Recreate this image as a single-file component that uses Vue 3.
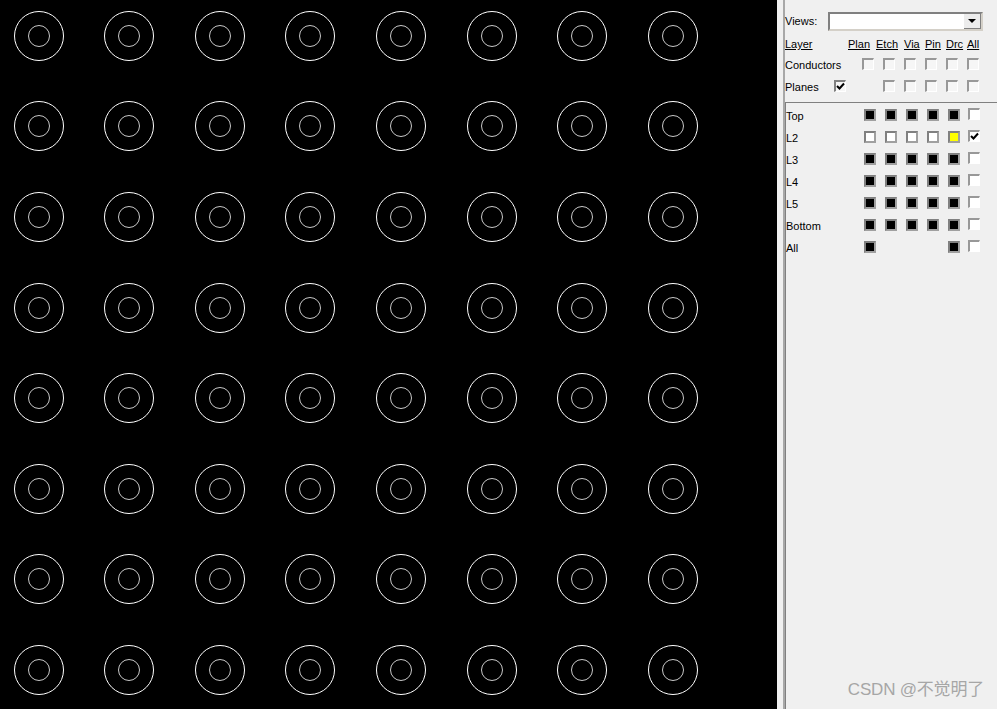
<template>
  <div class="screen">
    <svg class="board" width="777" height="709" viewBox="0 0 777 709">
      <g v-for="y in padY" :key="y">
        <g v-for="x in padX" :key="x">
          <circle :cx="x" :cy="y" r="24.5" class="outer" />
          <circle :cx="x" :cy="y" r="10.5" class="inner" />
        </g>
      </g>
    </svg>

    <div class="panel">
      <div class="panel-body">
        <div class="views-row">
          <span class="views-label">Views:</span>
          <div class="combo">
            <div class="combo-btn"><i class="arrow"></i></div>
          </div>
        </div>

        <div class="head">
          <span class="head-name"><u>Layer</u></span>
          <span v-for="h in heads" :key="h"><u>{{ h }}</u></span>
        </div>

        <div class="top-grid">
          <span class="name">Conductors</span>
          <span></span>
          <div v-for="n in 6" :key="n" class="cell"><span class="check"></span></div>
        </div>

        <div class="top-grid">
          <span class="name">Planes</span>
          <div class="cell planes-cell"><span class="check tick"><svg width="9" height="9" viewBox="0 0 9 9"><path d="M1 4 L3.500 6.500 L8 1.500" fill="none" stroke="#000" stroke-width="2" /></svg></span></div>
          <div class="cell blank"></div>
          <div v-for="n in 5" :key="n" class="cell"><span class="check"></span></div>
        </div>

        <div class="layers">
          <div v-for="l in layers" :key="l.name" class="layer-row">
            <span class="layer-name">{{ l.name }}</span>
            <div v-for="(c, i) in l.cells" :key="i" class="cell">
              <span v-if="c" class="swatch" :class="c"></span>
            </div>
            <div class="cell last-cell">
              <span class="check white">
                <svg v-if="l.on" width="9" height="9" viewBox="0 0 9 9"><path d="M1 4 L3.500 6.500 L8 1.500" fill="none" stroke="#000" stroke-width="2" /></svg>
              </span>
            </div>
          </div>
        </div>
      </div>
      <div class="watermark">CSDN @不觉明了</div>
    </div>
  </div>
</template>

<script setup>
const padX = [39, 129, 220, 310, 401, 492, 582, 673]
const padY = [36, 126, 217, 308, 398, 489, 579, 670]

const heads = ['Plan', 'Etch', 'Via', 'Pin', 'Drc', 'All']

const full = ['black', 'black', 'black', 'black', 'black']
const layers = [
  { name: 'Top', cells: full },
  { name: 'L2', cells: ['empty', 'empty', 'empty', 'empty', 'yellow'], on: true },
  { name: 'L3', cells: full },
  { name: 'L4', cells: full },
  { name: 'L5', cells: full },
  { name: 'Bottom', cells: full },
  { name: 'All', cells: ['black', null, null, null, 'black'] }
]
</script>

<style>
html, body {
  margin: 0;
  background: #000;
  overflow: hidden;
}
</style>

<style scoped>
.screen {
  display: flex;
  width: 997px;
  height: 709px;
  background: #000;
  font-family: "Liberation Sans", Arial, sans-serif;
  font-size: 11px;
  color: #000;
}

.board {
  display: block;
  flex: none;
}

.outer {
  fill: none;
  stroke: #fff;
  stroke-width: 1;
}

.inner {
  fill: none;
  stroke: #c8c8c8;
  stroke-width: 1;
}

.panel {
  position: relative;
  flex: none;
  width: 220px;
  height: 709px;
  background: #f0f0f0;
  padding-left: 6px;
  box-sizing: border-box;
}

.panel-body {
  height: 100%;
  border-left: 2px solid #a8a8a8;
  box-sizing: border-box;
  display: flex;
  flex-direction: column;
}

.views-row {
  display: flex;
  height: 20px;
  margin-top: 11px;
}

.views-label {
  width: 43px;
  line-height: 20px;
}

.combo {
  width: 155px;
  height: 19px;
  margin-top: 1px;
  box-sizing: border-box;
  background: #fff;
  border: 2px solid;
  border-color: #808080 #d4d0c8 #d4d0c8 #808080;
  display: flex;
  justify-content: flex-end;
}

.combo-btn {
  width: 16px;
  background: #ececec;
  border-right: 1px solid #808080;
  border-bottom: 1px solid #808080;
  display: flex;
  align-items: center;
  justify-content: center;
}

.arrow {
  width: 0;
  height: 0;
  border-left: 4px solid transparent;
  border-right: 4px solid transparent;
  border-top: 4px solid #000;
}

.head {
  display: grid;
  grid-template-columns: 63px 28px 28px 21px 21px 21px 20px;
  align-items: center;
  height: 18px;
  margin-top: 4px;
}

.top-grid {
  display: grid;
  grid-template-columns: 49px 23px repeat(6, 21px);
  align-items: center;
  height: 22px;
}

.name {
  white-space: nowrap;
  padding-top: 2px;
}

.cell {
  display: flex;
  align-items: center;
  justify-content: center;
}

.last-cell {
  padding-bottom: 2px;
}

.planes-cell {
  justify-content: flex-start;
}

.check {
  display: flex;
  align-items: center;
  justify-content: center;
  width: 12px;
  height: 12px;
  box-sizing: border-box;
  background: #f6f6f6;
  border-style: solid;
  border-width: 2px 1px 1px 2px;
  border-color: #989898 #fff #fff #989898;
}

.check.tick {
  border-color: #808080 #fff #fff #808080;
}

.check.white {
  background: #fff;
}

.check svg {
  flex: none;
}

.layers {
  flex: 1;
  margin-top: 5px;
  border-top: 1px solid #808080;
  border-left: 1px solid #808080;
  padding-top: 1px;
}

.layer-row {
  display: grid;
  grid-template-columns: 73px repeat(5, 21px) 19px;
  align-items: center;
  height: 22px;
}

.layer-name {
  padding-top: 2px;
}

.swatch {
  display: block;
  width: 12px;
  height: 12px;
  box-sizing: border-box;
  border: 2px solid #a0a0a0;
  border-top-color: #808080;
  border-left-color: #808080;
}

.swatch.black {
  background: #000;
}

.swatch.empty {
  background: #fff;
}

.swatch.yellow {
  background: #ff0;
}

.watermark {
  position: absolute;
  right: 13px;
  bottom: 9px;
  font-family: "Liberation Sans", "Noto Sans CJK SC", sans-serif;
  font-size: 17px;
  letter-spacing: -0.2px;
  color: #a6a6a6;
}
</style>
